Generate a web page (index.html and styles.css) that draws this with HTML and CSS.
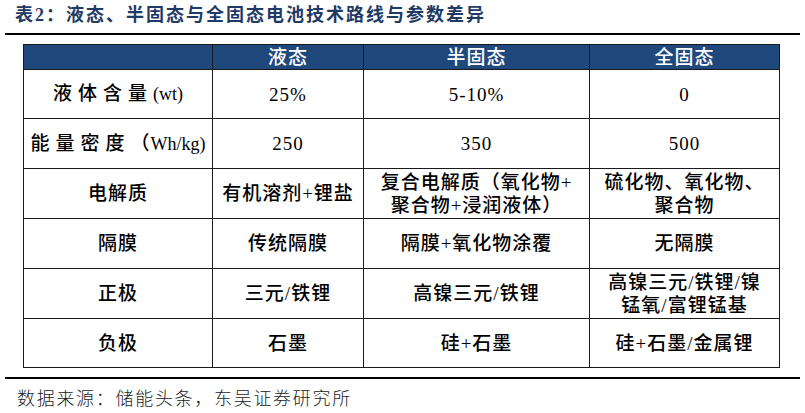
FILE: index.html
```html
<!DOCTYPE html>
<html lang="zh-CN">
<head>
<meta charset="utf-8">
<title>表2</title>
<link rel="stylesheet" href="styles.css">
</head>
<body>
<div class="page">
  <h1 class="title">表2：液态、半固态与全固态电池技术路线与参数差异</h1>
  <div class="table-wrap">
    <table class="params">
      <colgroup>
        <col class="c1"><col class="c2"><col class="c3"><col class="c4">
      </colgroup>
      <thead>
        <tr class="head"><th></th><th>液态</th><th>半固态</th><th>全固态</th></tr>
      </thead>
      <tbody>
        <tr class="r1"><td><span class="wide">液体含量</span><span class="latin">(wt)</span></td><td>25%</td><td>5-10%</td><td>0</td></tr>
        <tr class="r2"><td><span class="wide">能量密度</span>（<span class="latin">Wh/kg)</span></td><td>250</td><td>350</td><td>500</td></tr>
        <tr class="r3"><td>电解质</td><td>有机溶剂+锂盐</td><td>复合电解质（氧化物+<br>聚合物+浸润液体）</td><td>硫化物、氧化物、<br>聚合物</td></tr>
        <tr class="r4"><td>隔膜</td><td>传统隔膜</td><td>隔膜+氧化物涂覆</td><td>无隔膜</td></tr>
        <tr class="r5"><td>正极</td><td>三元/铁锂</td><td>高镍三元/铁锂</td><td>高镍三元/铁锂/镍<br>锰氧/富锂锰基</td></tr>
        <tr class="r6"><td>负极</td><td>石墨</td><td>硅+石墨</td><td>硅+石墨/金属锂</td></tr>
      </tbody>
    </table>
  </div>
  <p class="source">数据来源：储能头条，东吴证券研究所</p>
</div>
</body>
</html>
```

FILE: styles.css
```css
* { box-sizing: border-box; }
html, body { margin: 0; padding: 0; background: #ffffff; }
body {
  width: 805px;
  height: 413px;
  overflow: hidden;
  font-family: "Liberation Serif", "Noto Sans CJK SC", serif;
  color: #000;
}
.page { display: flex; flex-direction: column; }

.title {
  margin: 0 5px;
  padding: 4px 0 0 10px;
  height: 35px;
  border-bottom: 2px solid #000;
  font-size: 18px;
  line-height: 22px;
  letter-spacing: 2px;
  font-weight: 700;
  color: #1f3a64;
  font-family: "Liberation Serif", "Noto Sans CJK SC", serif;
}

.table-wrap { padding: 9px 0 0 23px; }

.params {
  border-collapse: collapse;
  table-layout: fixed;
  width: 756px;
  font-size: 19px;
  letter-spacing: 1px;
  font-weight: 500;
}
.c1 { width: 189px; }
.c2 { width: 151px; }
.c3 { width: 226px; }
.c4 { width: 190px; }

.params th, .params td {
  border: 1px solid #1a1a1a;
  text-align: center;
  vertical-align: middle;
  padding: 0;
  font-weight: 500;
  line-height: 23px;
}
.params th {
  background: #1f497d;
  color: #ffffff;
}
.head { height: 25px; }
.r1 { height: 49px; }
.r2 { height: 50px; }
.r3, .r4, .r5 { height: 50px; }
.r6 { height: 49px; }

.wide { letter-spacing: 6px; }
.latin { letter-spacing: 0; font-size: 18px; }

.source {
  margin: 9px 5px 0;
  padding: 7px 0 0 12px;
  border-top: 2px solid #000;
  font-size: 18px;
  line-height: 22px;
  letter-spacing: 1.7px;
  color: #222;
  font-weight: 300;
  font-family: "Noto Sans CJK SC", sans-serif;
}
```
